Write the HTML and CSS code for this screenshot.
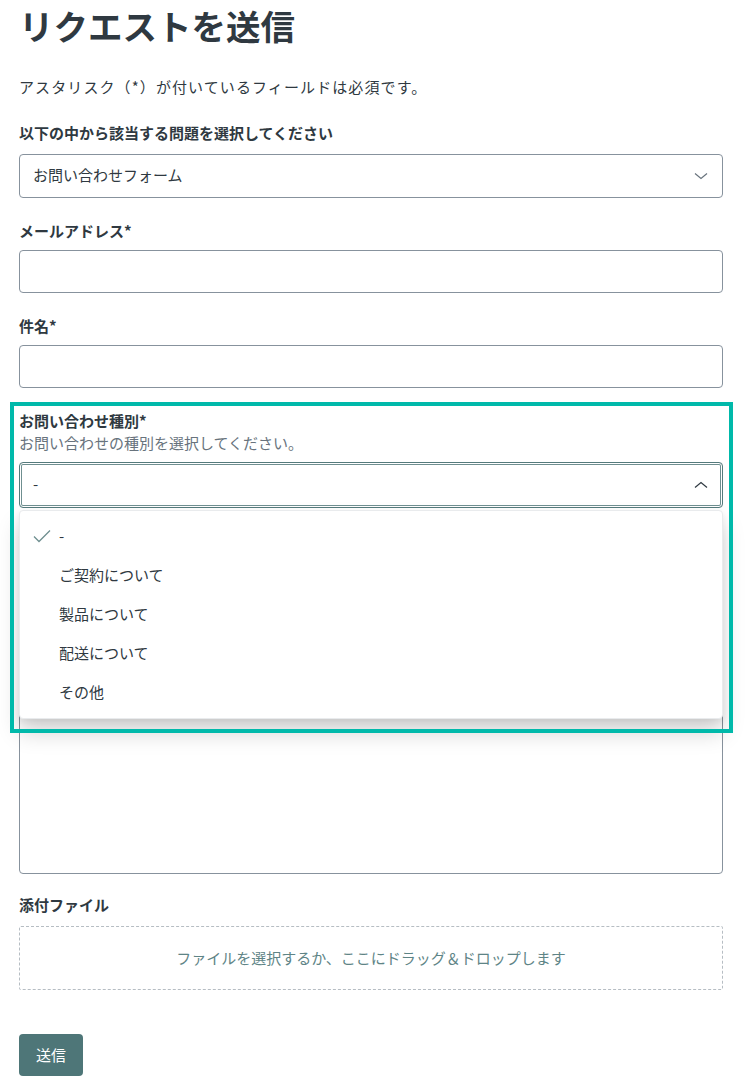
FILE: index.html
```html
<!DOCTYPE html>
<html lang="ja">
<head>
<meta charset="utf-8">
<title>リクエストを送信</title>
<link rel="stylesheet" href="styles.css">
</head>
<body>
<div class="page">
  <h1 class="title">リクエストを送信</h1>
  <p class="note">アスタリスク（*）が付いているフィールドは必須です。</p>

  <div class="field field-first">
    <label class="label">以下の中から該当する問題を選択してください</label>
    <div class="select">
      <span>お問い合わせフォーム</span>
      <svg class="chev" width="14" height="8" viewBox="0 0 14 8"><path d="M1 1.5 L7 6.5 L13 1.5" fill="none" stroke="#68737d" stroke-width="1.2"/></svg>
    </div>
  </div>

  <div class="field">
    <label class="label">メールアドレス*</label>
    <div class="input"></div>
  </div>

  <div class="field">
    <label class="label">件名*</label>
    <div class="input"></div>
  </div>

  <div class="field field-type">
    <label class="label">お問い合わせ種別*</label>
    <p class="hint">お問い合わせの種別を選択してください。</p>
    <div class="select select-open">
      <span>-</span>
      <svg class="chev" width="14" height="8" viewBox="0 0 14 8"><path d="M1 6.5 L7 1.5 L13 6.5" fill="none" stroke="#2f3941" stroke-width="1.2"/></svg>
    </div>
    <ul class="menu">
      <li class="item item-selected">
        <svg class="check" width="18" height="14" viewBox="0 0 18 14"><path d="M1 7.5 L6 12.5 L17 1.5" fill="none" stroke="#6f8f90" stroke-width="1.3"/></svg>
        <span>-</span>
      </li>
      <li class="item"><span>ご契約について</span></li>
      <li class="item"><span>製品について</span></li>
      <li class="item"><span>配送について</span></li>
      <li class="item"><span>その他</span></li>
    </ul>
  </div>

  <div class="field field-desc">
    <label class="label">詳細*</label>
    <div class="textarea"></div>
  </div>

  <div class="field field-attach">
    <label class="label">添付ファイル</label>
    <div class="dropzone">ファイルを選択するか、ここにドラッグ＆ドロップします</div>
  </div>

  <button class="submit" type="button">送信</button>

  <div class="highlight"></div>
</div>
</body>
</html>
```

FILE: styles.css
```css
* { box-sizing: border-box; }

html, body {
  margin: 0;
  padding: 0;
  background: #ffffff;
}

body {
  font-family: "Noto Sans CJK JP", "Noto Sans", sans-serif;
  color: #2f3941;
  font-size: 15px;
}

.page {
  position: relative;
  width: 704px;
  margin-left: 19px;
  padding-bottom: 10px;
}

.title {
  margin: 0;
  padding-top: 3px;
  font-size: 34.5px;
  line-height: 44px;
  font-weight: 700;
  color: #2f3941;
}

.note {
  margin: 29px 0 0;
  font-size: 15px;
  line-height: 22px;
  letter-spacing: 1.1px;
  color: #2f3941;
}

.field {
  margin-top: 22px;
}

.field-first {
  margin-top: 24px;
}

.label {
  display: block;
  font-size: 15px;
  line-height: 22px;
  font-weight: 700;
  color: #2f3941;
  margin-bottom: 8px;
}

.field-first .label {
  margin-bottom: 10px;
}

.hint {
  margin: -8px 0 8px;
  font-size: 15px;
  line-height: 22px;
  color: #68737d;
}

.select {
  height: 44px;
  border: 1px solid #87929d;
  border-radius: 4px;
  display: flex;
  align-items: center;
  justify-content: space-between;
  padding: 0 14px 3px 13px;
  font-size: 15px;
  color: #2f3941;
}

.select .chev {
  margin-top: 3px;
}

.select-open {
  height: 46px;
  margin-top: 0;
  border-color: #557a7c;
  box-shadow: inset 0 0 0 1px #ffffff, inset 0 0 0 2px #6f8f90;
}

.chev {
  display: block;
}

.input {
  height: 43px;
  border: 1px solid #87929d;
  border-radius: 4px;
}

.field-type {
  position: relative;
}

.menu {
  position: absolute;
  left: 0;
  right: 0;
  top: 100%;
  margin: 2px 0 0;
  padding: 6px 0 6px;
  list-style: none;
  background: #ffffff;
  border: 1px solid #e9ebed;
  border-radius: 4px;
  box-shadow: 0 14px 22px rgba(0, 0, 0, 0.17), 0 3px 6px rgba(0, 0, 0, 0.07);
  z-index: 2;
}

.item {
  height: 39px;
  display: flex;
  align-items: center;
  padding-left: 39px;
  padding-bottom: 2px;
  font-size: 15px;
  color: #2f3941;
  position: relative;
}

.check {
  position: absolute;
  left: 13px;
  top: 12px;
}

.field-desc .textarea {
  height: 314px;
  border: 1px solid #87929d;
  border-radius: 4px;
}

.field-attach {
  margin-top: 20px;
}

.dropzone {
  height: 64px;
  margin-top: 10px;
  border: 1px dashed #b6bdc3;
  border-radius: 2px;
  display: flex;
  align-items: center;
  justify-content: center;
  padding-bottom: 2px;
  font-size: 15px;
  color: #5e8486;
}

.submit {
  display: block;
  margin-top: 44px;
  width: 64px;
  height: 42px;
  border: none;
  border-radius: 4px;
  background: #4e7678;
  color: #ffffff;
  font-family: "Noto Sans CJK JP", "Noto Sans", sans-serif;
  font-size: 15px;
  font-weight: 400;
  padding: 0 0 2px;
}

.highlight {
  position: absolute;
  left: -9px;
  top: 402px;
  width: 723px;
  height: 331px;
  border: 4px solid #00b9aa;
  pointer-events: none;
  z-index: 3;
}
```
